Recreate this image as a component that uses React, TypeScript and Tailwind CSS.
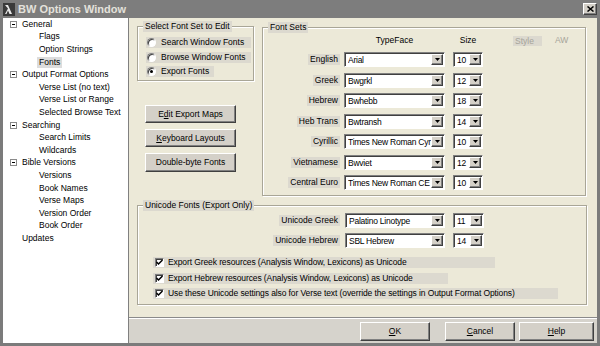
import React from "react";

const fontSets = [
  { label: "English", face: "Arial", size: "10" },
  { label: "Greek", face: "Bwgrkl", size: "12" },
  { label: "Hebrew", face: "Bwhebb", size: "18" },
  { label: "Heb Trans", face: "Bwtransh", size: "14" },
  { label: "Cyrillic", face: "Times New Roman Cyr", size: "10" },
  { label: "Vietnamese", face: "Bwviet", size: "12" },
  { label: "Central Euro", face: "Times New Roman CE", size: "10" },
];

const tree = [
  { label: "General", children: ["Flags", "Option Strings", "Fonts"] },
  { label: "Output Format Options", children: ["Verse List (no text)", "Verse List or Range", "Selected Browse Text"] },
  { label: "Searching", children: ["Search Limits", "Wildcards"] },
  { label: "Bible Versions", children: ["Versions", "Book Names", "Verse Maps", "Version Order", "Book Order"] },
  { label: "Updates", children: [] as string[] },
];

const raised =
  "bg-[#d4d0c8] border border-t-white border-l-white border-r-[#404040] border-b-[#404040] shadow-[inset_-1px_-1px_0_#808080]";

function Arrow() {
  return (
    <div className={`w-[12px] h-full shrink-0 flex items-center justify-center ${raised}`}>
      <svg width="5" height="3" viewBox="0 0 5 3">
        <path d="M0 0h5L2.5 3z" fill="#000" />
      </svg>
    </div>
  );
}

function Combo({ value, className }: { value: string; className: string }) {
  return (
    <div
      className={`flex h-[15px] bg-white border border-t-[#808080] border-l-[#808080] border-r-white border-b-white shadow-[inset_1px_1px_0_#404040] pl-[3px] pt-[1px] pr-[1px] pb-[1px] ${className}`}
    >
      <span className="flex-1 leading-[12px] whitespace-nowrap overflow-hidden tracking-[-0.25px]">{value}</span>
      <Arrow />
    </div>
  );
}

function Group({ label, className, children }: { label: string; className: string; children: React.ReactNode }) {
  return (
    <div className={`relative border border-[#a9a697] shadow-[inset_1px_1px_0_#fff,1px_1px_0_#fff] ${className}`}>
      <span className="absolute -top-[6px] left-[5px] px-[2px] bg-[#dcd9cf] leading-[11px] whitespace-nowrap">
        {label}
      </span>
      {children}
    </div>
  );
}

function Label({ text }: { text: string }) {
  return <span className="bg-[#dcd9cf] px-[2px] leading-[11px] whitespace-nowrap">{text}</span>;
}

function Btn({ children, className }: { children: React.ReactNode; className: string }) {
  return (
    <div className={`flex items-center justify-center ${raised} ${className}`}>
      <span className="leading-[11px]">{children}</span>
    </div>
  );
}

function Radio({ label, checked, width }: { label: string; checked?: boolean; width: string }) {
  return (
    <div className={`flex items-center h-[11px] bg-[#dcd9cf] ${width}`}>
      <div className="ml-[1px] w-[9px] h-[9px] rounded-full bg-white border border-t-[#808080] border-l-[#808080] border-r-white border-b-white shadow-[inset_1px_1px_0_#404040] flex items-center justify-center">
        {checked && <div className="w-[3px] h-[3px] rounded-full bg-black" />}
      </div>
      <span className="ml-[5px] leading-[11px] whitespace-nowrap">{label}</span>
    </div>
  );
}

function Check({ label, width }: { label: string; width: string }) {
  return (
    <div className={`flex items-center h-[11px] bg-[#dcd9cf] ${width}`}>
      <div className="ml-[2px] w-[9px] h-[9px] bg-white border border-t-[#808080] border-l-[#808080] border-r-white border-b-white shadow-[inset_1px_1px_0_#404040] flex items-center justify-center">
        <svg width="7" height="7" viewBox="0 0 7 7">
          <path d="M0.5 3 L2.5 5 L6.5 1" stroke="#000" strokeWidth="1.5" fill="none" />
        </svg>
      </div>
      <span className="ml-[4px] leading-[11px] whitespace-nowrap tracking-[-0.1px]">{label}</span>
    </div>
  );
}

export default function App() {
  return (
    <div
      className="w-[600px] h-[346px] bg-[#7b7b7b] flex flex-col text-[8.5px] text-black overflow-hidden"
      style={{ fontFamily: '"Liberation Sans", Arial, sans-serif' }}
    >
      {/* Title bar */}
      <div className="h-[18px] flex items-center bg-[#7d7d7d] pl-[3px] pr-[3px]">
        <svg width="12" height="13" viewBox="0 0 12 13">
          <rect width="12" height="13" fill="#3a3a3a" />
          <path d="M2 2h3l4 9h-2.5l-1.5-3.5L3.5 11H2l3-5.5z" fill="#e8e8e8" />
        </svg>
        <span className="ml-[3px] font-bold text-[11px] text-[#e4e2dc] leading-[12px]">BW Options Window</span>
        <div className={`ml-auto w-[14px] h-[12px] flex items-center justify-center ${raised}`}>
          <svg width="7" height="6" viewBox="0 0 7 6">
            <path d="M0.5 0.5L6.5 5.5M6.5 0.5L0.5 5.5" stroke="#000" strokeWidth="1.5" />
          </svg>
        </div>
      </div>

      <div className="flex-1 flex pl-[3px] pr-[3px] pb-[3px]">
        {/* Tree */}
        <div className="w-[126px] bg-white border-r border-[#808080]">
          {tree.map((node) => (
            <div key={node.label}>
              <div className="h-[12.6px] flex items-center">
                {node.children.length > 0 ? (
                  <svg width="7" height="7" viewBox="0 0 7 7" className="ml-[7px]">
                    <rect x="0.5" y="0.5" width="6" height="6" fill="#fff" stroke="#8a8a8a" />
                    <path d="M2 3.5h3" stroke="#000" />
                  </svg>
                ) : (
                  <div className="ml-[7px] w-[7px]" />
                )}
                <span className="ml-[5px] whitespace-nowrap leading-[11px]">{node.label}</span>
              </div>
              {node.children.map((c) => (
                <div key={c} className="h-[12.6px] flex items-center pl-[34px]">
                  <span className={`whitespace-nowrap leading-[11px] px-[2px] ${c === "Fonts" ? "bg-[#dcdcdc]" : ""}`}>{c}</span>
                </div>
              ))}
            </div>
          ))}
        </div>

        {/* Right side */}
        <div className="flex-1 flex flex-col">
          <div className="flex-1 bg-[#ece9d8] pt-[8px] pl-[8px] pr-[11px]">
            <div className="flex gap-[8px] h-[170px]">
              {/* Left column */}
              <div className="w-[117px] flex flex-col">
                <Group label="Select Font Set to Edit" className="h-[55px] flex flex-col gap-[3.5px] pt-[10px] pl-[8px]">
                  <Radio label="Search Window Fonts" width="w-[105px]" />
                  <Radio label="Browse Window Fonts" width="w-[105px]" />
                  <Radio label="Export Fonts" checked width="w-[68px]" />
                </Group>
                <div className="flex flex-col gap-[6px] mt-[24px] ml-[8px]">
                  <Btn className="w-[91px] h-[18px]">
                    E<span className="underline">d</span>it Export Maps
                  </Btn>
                  <Btn className="w-[91px] h-[18px]">
                    <span className="underline">K</span>eyboard Layouts
                  </Btn>
                  <Btn className="w-[91px] h-[19px]">Double-byte Fonts</Btn>
                </div>
              </div>

              {/* Font Sets */}
              <Group label="Font Sets" className="flex-1 mt-[1px] h-[169px]">
                <div className="flex items-center h-[11px] mt-[7px]">
                  <div className="w-[77px]" />
                  <div className="ml-[4px] w-[101px] text-center leading-[11px]">TypeFace</div>
                  <div className="ml-[8px] w-[30px] text-center leading-[11px]">Size</div>
                  <div className="ml-[30px] w-[29px] h-[10px] bg-[#dcd9cf] text-[#a6a49a] leading-[10px] pl-[2px]">Style</div>
                  <div className="ml-[13px] text-[#a6a49a] leading-[11px]">AW</div>
                </div>
                <div className="flex flex-col gap-[5.5px] mt-[6px]">
                  {fontSets.map((f) => (
                    <div key={f.label} className="flex items-center h-[15px]">
                      <div className="w-[77px] flex justify-end">
                        <Label text={f.label} />
                      </div>
                      <Combo value={f.face} className="ml-[4px] w-[101px]" />
                      <Combo value={f.size} className="ml-[8px] w-[30px]" />
                    </div>
                  ))}
                </div>
              </Group>
            </div>

            {/* Unicode */}
            <Group label="Unicode Fonts (Export Only)" className="mt-[9px] h-[100px] mr-[-1px]">
              <div className="flex flex-col gap-[5px] mt-[7px]">
                <div className="flex items-center h-[15px]">
                  <div className="w-[202px] flex justify-end">
                    <Label text="Unicode Greek" />
                  </div>
                  <Combo value="Palatino Linotype" className="ml-[5px] w-[100px]" />
                  <Combo value="11" className="ml-[8px] w-[31px]" />
                </div>
                <div className="flex items-center h-[15px]">
                  <div className="w-[202px] flex justify-end">
                    <Label text="Unicode Hebrew" />
                  </div>
                  <Combo value="SBL Hebrew" className="ml-[5px] w-[100px]" />
                  <Combo value="14" className="ml-[8px] w-[31px]" />
                </div>
              </div>
              <div className="flex flex-col gap-[4.5px] mt-[9px] ml-[15px]">
                <Check label="Export Greek resources (Analysis Window, Lexicons) as Unicode" width="w-[342px]" />
                <Check label="Export Hebrew resources (Analysis Window, Lexicons) as Unicode" width="w-[295px]" />
                <Check
                  label="Use these Unicode settings also for Verse text (override the settings in Output Format Options)"
                  width="w-[405px]"
                />
              </div>
            </Group>
          </div>

          {/* Bottom buttons */}
          <div className="h-[26px] bg-[#d6d3cc] border-t border-[#8a8a8a] shadow-[inset_0_1px_0_#fff] flex justify-end items-start pt-[4px] pr-[3px]">
            <Btn className="w-[70px] h-[19px]">
              <span className="underline">O</span>K
            </Btn>
            <Btn className="ml-[15px] w-[70px] h-[19px]">
              <span className="underline">C</span>ancel
            </Btn>
            <Btn className="ml-[4px] w-[75px] h-[19px]">
              <span className="underline">H</span>elp
            </Btn>
          </div>
        </div>
      </div>
    </div>
  );
}
